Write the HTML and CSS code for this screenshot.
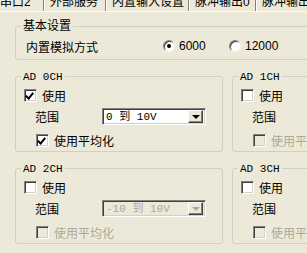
FILE: index.html
```html
<!DOCTYPE html>
<html lang="zh">
<head>
	<meta charset="UTF-8">
	<title>设置</title>
	<link rel="stylesheet" href="styles.css">
</head>
<body>
	<div class="tabs">
		<span class="tab t1">串口2</span>
		<span class="tab t2">外部服务</span>
		<span class="tab t3">内置输入设置</span>
		<span class="tab t4">脉冲输出0</span>
		<span class="tab t5">脉冲输出1</span>
	</div>

	<div class="page">
		<div class="group basic">
			<span class="legend">基本设置</span>
			<div class="basic-row">
				<span class="basic-label">内置模拟方式</span>
				<span class="radio on"></span><span class="radio-text">6000</span>
				<span class="radio off"></span><span class="radio-text">12000</span>
			</div>
		</div>

		<div class="channels">
			<div class="group ch">
				<span class="legend mono">AD 0CH</span>
				<div class="row use"><span class="check checked"></span><span class="txt">使用</span></div>
				<div class="row range">
					<span class="range-label">范围</span>
					<div class="combo"><span class="combo-text">0 到 10V</span><span class="combo-btn"></span></div>
				</div>
				<div class="row avg"><span class="check checked"></span><span class="txt">使用平均化</span></div>
			</div>
			<div class="group ch">
				<span class="legend mono">AD 1CH</span>
				<div class="row use"><span class="check"></span><span class="txt">使用</span></div>
				<div class="row range">
					<span class="range-label">范围</span>
					<div class="combo disabled"><span class="combo-text">-10 到 10V</span><span class="combo-btn"></span></div>
				</div>
				<div class="row avg"><span class="check disabled"></span><span class="txt gray">使用平均化</span></div>
			</div>
			<div class="group ch">
				<span class="legend mono">AD 2CH</span>
				<div class="row use"><span class="check"></span><span class="txt">使用</span></div>
				<div class="row range">
					<span class="range-label">范围</span>
					<div class="combo disabled"><span class="combo-text">-10 到 10V</span><span class="combo-btn"></span></div>
				</div>
				<div class="row avg"><span class="check disabled"></span><span class="txt gray">使用平均化</span></div>
			</div>
			<div class="group ch">
				<span class="legend mono">AD 3CH</span>
				<div class="row use"><span class="check"></span><span class="txt">使用</span></div>
				<div class="row range">
					<span class="range-label">范围</span>
					<div class="combo disabled"><span class="combo-text">-10 到 10V</span><span class="combo-btn"></span></div>
				</div>
				<div class="row avg"><span class="check disabled"></span><span class="txt gray">使用平均化</span></div>
			</div>
		</div>
	</div>
</body>
</html>
```

FILE: styles.css
```css
body{
	margin: 0;
	width: 307px;
	height: 253px;
	overflow: hidden;
	background: #ece9d8;
	font-family: "Liberation Sans", "Noto Sans CJK SC", sans-serif;
	font-size: 12px;
	color: #000;
}

/* tab strip, cut off at the top */
.tabs{
	display: flex;
	height: 16px;
	margin-top: -5px;
	border-bottom: 1px solid #fff;
	white-space: nowrap;
}
.tab{
	flex: none;
	height: 16px;
	line-height: 14px;
	padding-left: 6px;
	border-right: 1px solid #808080;
	box-shadow: 1px 0 0 #fff;
}
.t1{ width: 43px; padding-left: 0; }
.t2{ width: 55px; }
.t3{ width: 76px; }
.t4{ width: 60px; }
.t5{ width: 80px; }

.page{
	padding: 14px 0 0 15px;
}

.group{
	position: relative;
	border: 1px solid #d0d0bf;
	border-radius: 3px;
	box-sizing: border-box;
}
.legend{
	position: absolute;
	top: -8px;
	left: 5px;
	padding: 0 2px;
	line-height: 14px;
	background: #ece9d8;
}
.mono{
	font-family: "Liberation Mono", monospace;
	font-size: 11px;
	top: -7px;
}

.basic{
	width: 300px;
	height: 34px;
}
.basic-row{
	display: flex;
	align-items: center;
	height: 14px;
	margin-top: 12px;
	padding-left: 10px;
}
.basic-label{
	width: 137px;
}
.radio{
	position: relative;
	width: 12px;
	height: 12px;
	box-sizing: border-box;
	border-radius: 50%;
	background: #fff;
	border: 1px solid;
	border-color: #808080 #f4f3ee #f4f3ee #808080;
	box-shadow: inset 1px 1px 0 #404040;
}
.radio.on::after{
	content: "";
	position: absolute;
	left: 3px;
	top: 3px;
	width: 4px;
	height: 4px;
	border-radius: 50%;
	background: #000;
}
.radio-text{
	margin-left: 4px;
	width: 50px;
}

.channels{
	display: grid;
	grid-template-columns: 208px 208px;
	grid-auto-rows: 76px;
	column-gap: 9px;
	row-gap: 16px;
	margin-top: 16px;
}
.ch{
	padding-top: 12px;
}
.row{
	display: flex;
	align-items: center;
	white-space: nowrap;
}
.use{
	height: 13px;
	padding-left: 8px;
}
.range{
	height: 17px;
	margin-top: 6px;
	padding-left: 19px;
}
.range-label{
	width: 67px;
}
.avg{
	height: 13px;
	margin-top: 9px;
	padding-left: 20px;
}
.txt{
	margin-left: 5px;
}
.gray{
	color: #aca899;
}

.check{
	position: relative;
	flex: none;
	width: 13px;
	height: 13px;
	box-sizing: border-box;
	background: #fff;
	border: 1px solid;
	border-color: #808080 #fff #fff #808080;
	box-shadow: inset 1px 1px 0 #404040, inset -1px -1px 0 #d4d0c8;
}
.check.disabled{
	background: #ece9d8;
}
.check.checked::after{
	content: "";
	position: absolute;
	left: 2px;
	top: 1px;
	width: 3px;
	height: 6px;
	border: solid #000;
	border-width: 0 2px 2px 0;
	transform: rotate(40deg);
}

.combo{
	display: flex;
	width: 104px;
	height: 17px;
	box-sizing: border-box;
	background: #fff;
	border: 1px solid;
	border-color: #808080 #fff #fff #808080;
	box-shadow: inset 1px 1px 0 #404040, inset -1px -1px 0 #d4d0c8;
	padding: 2px 2px 2px 3px;
	font-family: "Liberation Mono", "Noto Sans CJK SC", monospace;
	font-size: 11px;
}
.combo.disabled{
	background: #ece9d8;
	color: #aca899;
}
.combo-text{
	flex: 1;
	line-height: 12px;
}
.combo-btn{
	position: relative;
	width: 15px;
	height: 13px;
	margin-top: -1px;
	box-sizing: border-box;
	background: #ece9d8;
	border: 1px solid;
	border-color: #fff #404040 #404040 #fff;
	box-shadow: inset -1px -1px 0 #808080;
}
.combo-btn::after{
	content: "";
	position: absolute;
	left: 3px;
	top: 4px;
	border: 4px solid transparent;
	border-top: 4px solid #000;
	border-bottom: 0;
}
.combo.disabled .combo-btn::after{
	border-top-color: #aca899;
}
```
